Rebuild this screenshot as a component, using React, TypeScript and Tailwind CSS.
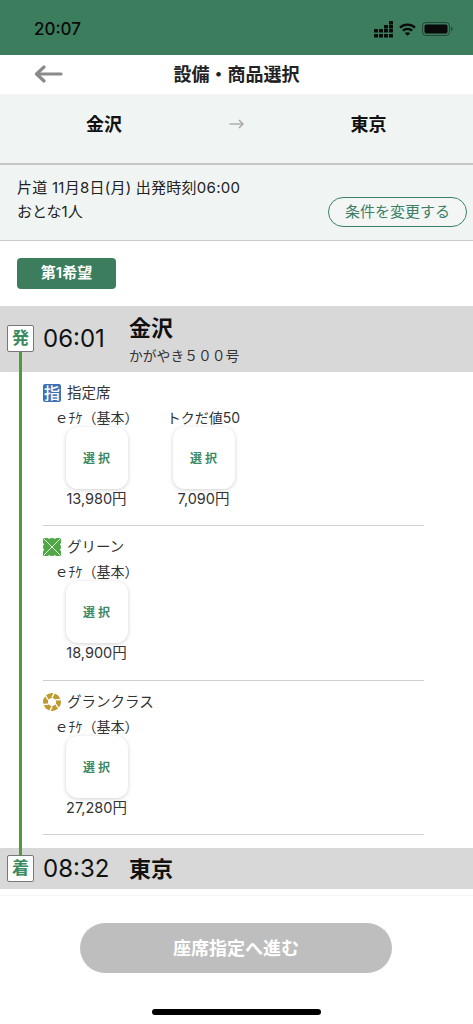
import React from "react";

const font = { fontFamily: '"Inter", "Noto Sans CJK JP", sans-serif' };

function Signal() {
  const dots: React.ReactNode[] = [];
  const cols = [
    [8, 13],
    [8, 13],
    [4, 8, 13],
    [0, 4, 8, 13],
  ];
  cols.forEach((c, i) =>
    c.forEach((y) =>
      dots.push(<rect key={`${i}-${y}`} x={i * 5} y={y} width="4" height="3.4" rx="0.5" fill="#0a0a0a" />)
    )
  );
  return (
    <svg width="19" height="17" viewBox="0 0 19 17">
      {dots}
    </svg>
  );
}

function Wifi() {
  return (
    <svg width="17" height="13" viewBox="0 0 17 13" fill="none" stroke="#0a0a0a" strokeWidth="2.2">
      <path d="M1 4.6C5.2 .6 11.8 .6 16 4.6" />
      <path d="M3.9 7.6c2.6-2.4 6.6-2.4 9.2 0" />
      <path d="M8.5 12.8 5.8 10.2c1.5-1.3 3.9-1.3 5.4 0z" fill="#0a0a0a" stroke="none" />
    </svg>
  );
}

function Battery() {
  return (
    <svg width="31" height="14" viewBox="0 0 31 14" fill="none">
      <rect x="0.5" y="0.5" width="27" height="13" rx="3.5" stroke="#0a0a0a" strokeOpacity="0.45" />
      <rect x="2.5" y="2.5" width="23" height="9" rx="2" fill="#0a0a0a" />
      <rect x="29" y="5" width="1.5" height="4" rx="0.7" fill="#0a0a0a" fillOpacity="0.45" />
    </svg>
  );
}

function BackArrow() {
  return (
    <svg width="29" height="18" viewBox="0 0 29 18" fill="none" stroke="#8a8a8a" strokeWidth="3.2" strokeLinecap="round" strokeLinejoin="round">
      <path d="M27 9H3" />
      <path d="M10 2 2.5 9 10 16" />
    </svg>
  );
}

function RouteArrow() {
  return (
    <svg width="15" height="10" viewBox="0 0 15 10" fill="none" stroke="#a3a3a3" strokeWidth="1.3">
      <path d="M0.5 5H14" />
      <path d="M10 1l4 4-4 4" />
    </svg>
  );
}

function ReservedIcon() {
  return (
    <div className="flex h-[18px] w-[18px] items-center justify-center rounded-[2px] bg-[#3b72b5] text-[16px] font-medium leading-none text-white">
      指
    </div>
  );
}

function GreenIcon() {
  return (
    <svg width="18" height="18" viewBox="0 0 18 18">
      <circle cx="9" cy="4.6" r="4.6" fill="#4fa845" />
      <circle cx="9" cy="13.4" r="4.6" fill="#4fa845" />
      <circle cx="4.6" cy="9" r="4.6" fill="#4fa845" />
      <circle cx="13.4" cy="9" r="4.6" fill="#4fa845" />
      <rect x="0" y="0" width="6" height="6" rx="1.5" fill="#4fa845" />
      <rect x="12" y="0" width="6" height="6" rx="1.5" fill="#4fa845" />
      <rect x="0" y="12" width="6" height="6" rx="1.5" fill="#4fa845" />
      <rect x="12" y="12" width="6" height="6" rx="1.5" fill="#4fa845" />
      <path d="M1 1 17 17M17 1 1 17" stroke="#e6f3e3" strokeWidth="1" />
    </svg>
  );
}

function GranIcon() {
  const segs = [0, 60, 120, 180, 240, 300];
  return (
    <svg width="18" height="18" viewBox="-9 -9 18 18">
      <circle r="9" fill="#bf9a2f" />
      <path d="M0 -4.6 4 -2.3 4 2.3 0 4.6 -4 2.3 -4 -2.3Z" fill="#fff" />
      {segs.map((a) => (
        <path key={a} d="M0 -4.6 L2.6 -9.5" stroke="#fff" strokeWidth="1.4" transform={`rotate(${a})`} />
      ))}
    </svg>
  );
}

function Fare({ name, price }: { name: string; price: string }) {
  return (
    <div className="flex w-[107px] flex-col items-center">
      <div className="h-[16px] whitespace-nowrap text-[14px] leading-[16px] text-[#333]">{name}</div>
      <div className="mt-[1px] flex h-[62px] w-[62px] items-center justify-center rounded-[12px] bg-white pt-[2px] pl-[3px] text-[12px] font-semibold tracking-[3px] text-[#3b8a66] shadow-[0_1px_4px_rgba(0,0,0,0.18)]">
        選択
      </div>
      <div className="mt-[1px] text-[14.5px] leading-[18px] text-[#333]">{price}</div>
    </div>
  );
}

function Section({
  icon,
  title,
  fares,
  height,
}: {
  icon: React.ReactNode;
  title: string;
  fares: { name: string; price: string }[];
  height: string;
}) {
  return (
    <div className={`mr-[49px] ml-[43px] border-b border-[#cfcfcf] pt-[12px] ${height}`}>
      <div className="flex h-[18px] items-center gap-[6px]">
        {icon}
        <span className="text-[14.5px] leading-[18px] text-[#333]">{title}</span>
      </div>
      <div className="mt-[8px] flex">
        {fares.map((f) => (
          <Fare key={f.name} {...f} />
        ))}
      </div>
    </div>
  );
}

function StopBadge({ text }: { text: string }) {
  return (
    <div className="flex h-[27px] w-[27px] items-center justify-center rounded-[2px] border border-[#777] bg-white text-[17px] font-semibold leading-none text-[#3a8a5e]">
      {text}
    </div>
  );
}

export default function App() {
  return (
    <div style={font} className="relative h-[1024px] w-[473px] overflow-hidden bg-white text-[#111]">
      {/* status bar */}
      <div className="flex h-[55px] items-center justify-between bg-[#3b7d5c] pr-[20px] pl-[34px] pt-[3px]">
        <span className="text-[17px] font-medium leading-none text-[#0a0a0a]">20:07</span>
        <div className="flex items-center gap-[6px]">
          <Signal />
          <Wifi />
          <Battery />
        </div>
      </div>

      {/* header */}
      <div className="relative flex h-[39px] items-center justify-center bg-white">
        <div className="absolute left-[34px] top-[10px]">
          <BackArrow />
        </div>
        <span className="text-[18px] font-bold leading-none text-[#222]">設備・商品選択</span>
      </div>

      {/* route */}
      <div className="grid h-[71px] grid-cols-[208px_56px_1fr] border-b-2 border-[#c6c6c6] bg-[#f0f4f3] pb-[9px]">
        <div className="flex items-center justify-center text-[18px] font-bold">金沢</div>
        <div className="flex items-center justify-center">
          <RouteArrow />
        </div>
        <div className="flex items-center justify-center text-[18px] font-bold">東京</div>
      </div>

      {/* conditions */}
      <div className="flex h-[76px] items-end justify-between border-b border-[#c9c9c9] bg-[#f0f4f3] pr-[6px] pb-[13px] pl-[17px]">
        <div className="pb-[3px] text-[15px] leading-[24px] text-[#222]">
          <div className="whitespace-nowrap tracking-[0.25px]">片道 11月8日(月) 出発時刻06:00</div>
          <div>おとな1人</div>
        </div>
        <div className="flex h-[30px] w-[139px] items-center justify-center rounded-full border border-[#3b8065] bg-white/20 text-[15px] text-[#3b8065]">
          条件を変更する
        </div>
      </div>

      {/* request tag */}
      <div className="px-[17px] pt-[17px] pb-[17px]">
        <div className="flex h-[31px] w-[99px] items-center justify-center rounded-[4px] bg-[#3b7d5c] text-[15px] font-semibold text-white">
          第1希望
        </div>
      </div>

      {/* departure */}
      <div className="flex h-[66px] bg-[#d8d8d8]">
        <div className="w-[129px] pl-[7px] pt-[19px]">
          <div className="flex items-center gap-[9px]">
            <StopBadge text="発" />
            <span className="text-[24px] leading-none text-[#111]">06:01</span>
          </div>
        </div>
        <div className="pt-[7px]">
          <div className="text-[22px] font-bold leading-[30px]">金沢</div>
          <div className="mt-[3px] text-[13.8px] leading-[20px] text-[#333]">かがやき５００号</div>
        </div>
      </div>

      <Section
        icon={<ReservedIcon />}
        title="指定席"
        height="h-[154px]"
        fares={[
          { name: "ｅﾁｹ（基本）", price: "13,980円" },
          { name: "トクだ値50", price: "7,090円" },
        ]}
      />
      <Section
        icon={<GreenIcon />}
        title="グリーン"
        height="h-[155px]"
        fares={[{ name: "ｅﾁｹ（基本）", price: "18,900円" }]}
      />
      <Section
        icon={<GranIcon />}
        title="グランクラス"
        height="h-[154px]"
        fares={[{ name: "ｅﾁｹ（基本）", price: "27,280円" }]}
      />

      {/* arrival */}
      <div className="mt-[13px] flex h-[41px] items-center bg-[#d8d8d8] pl-[7px]">
        <StopBadge text="着" />
        <span className="ml-[9px] w-[86px] text-[24px] leading-none text-[#111]">08:32</span>
        <span className="text-[22px] font-bold leading-none">東京</span>
      </div>

      {/* timeline line */}
      <div className="absolute left-[19px] top-[352px] h-[503px] w-[3px] bg-[#4f9a3c]" />

      {/* footer */}
      <div className="mt-[6px] h-[129px] border-t border-[#f0f7f5] pt-[27px]">
        <div className="ml-[80px] flex h-[50px] w-[312px] items-center justify-center rounded-[25px] bg-[#bebebe] text-[18px] font-semibold text-white">
          座席指定へ進む
        </div>
      </div>

      {/* home indicator */}
      <div className="absolute bottom-[9px] left-[152px] h-[6px] w-[169px] rounded-full bg-black" />
    </div>
  );
}
